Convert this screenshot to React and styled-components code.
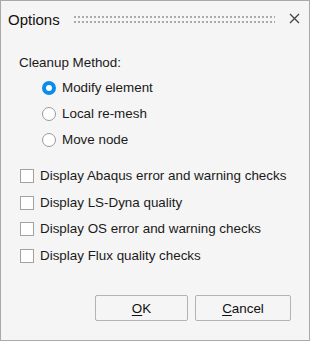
import React from "react"
import styled, { createGlobalStyle } from "styled-components"

const Global = createGlobalStyle`
  html, body { margin: 0; padding: 0; background: #f5f5f5; }
  body { font-family: "Liberation Sans", Arial, sans-serif; }
`

const App = () => {
  const methods = ["Modify element", "Local re-mesh", "Move node"]
  const checks = [
    "Display Abaqus error and warning checks",
    "Display LS-Dyna quality",
    "Display OS error and warning checks",
    "Display Flux quality checks",
  ]
  return (
    <>
      <Global />
      <Dialog>
        <TitleBar>
          <Title>Options</Title>
          <Grip />
          <Close>
            <svg width="11" height="11" viewBox="0 0 11 11">
              <path d="M1 1 L10 10 M10 1 L1 10" stroke="#444" strokeWidth="1.3" />
            </svg>
          </Close>
        </TitleBar>
        <Body>
          <Label>Cleanup Method:</Label>
          <Radios>
            {methods.map((m, i) => (
              <Row key={m}>
                <Radio $on={i === 0} />
                <span>{m}</span>
              </Row>
            ))}
          </Radios>
          <Checks>
            {checks.map((c) => (
              <Row key={c}>
                <Box />
                <span>{c}</span>
              </Row>
            ))}
          </Checks>
        </Body>
        <Footer>
          <Button $w={93}><u>O</u>K</Button>
          <Button $w={96}><u>C</u>ancel</Button>
        </Footer>
      </Dialog>
    </>
  )
}

export default App

// Styling
const Dialog = styled.div`
  box-sizing: border-box;
  width: 310px;
  height: 341px;
  border: 1px solid #a9a9a9;
  background: #f5f5f5;
  display: flex;
  flex-direction: column;
  color: #1a1a1a;
`
const TitleBar = styled.div`
  height: 36px;
  display: flex;
  align-items: center;
  padding: 0 8px 0 7px;
`
const Title = styled.div`
  font-size: 15px;
  color: #111;
  margin-top: 1px;
`
const Grip = styled.div`
  flex: 1;
  height: 7px;
  margin: 0 12px 0 14px;
  background-image: linear-gradient(to bottom, transparent 2px, #f5f5f5 2px),
    linear-gradient(to right, #ababab 2px, transparent 2px);
  background-size: 100% 5px, 4px 5px;
  background-position: 0 0, 0 0;
`
const Close = styled.div`
  width: 14px;
  display: flex;
  justify-content: center;
  margin-top: -1px;
`
const Body = styled.div`
  flex: 1;
  padding: 18px 0 0 18px;
  font-size: 13.4px;
`
const Label = styled.div`
  height: 16px;
  line-height: 16px;
  margin-bottom: 9px;
`
const Radios = styled.div`
  display: flex;
  flex-direction: column;
  gap: 10px;
  padding-left: 23px;
  margin-bottom: 20px;
`
const Checks = styled.div`
  display: flex;
  flex-direction: column;
  gap: 10.5px;
  padding-left: 1px;
`
const Row = styled.div`
  display: flex;
  align-items: center;
  gap: 6px;
  height: 16px;
  line-height: 16px;
`
const Radio = styled.span`
  box-sizing: border-box;
  width: 14px;
  height: 14px;
  border-radius: 50%;
  background: #fff;
  border: ${(p) => (p.$on ? "4px solid #0c8ce9" : "1px solid #9a9a9a")};
`
const Box = styled.span`
  box-sizing: border-box;
  width: 14px;
  height: 14px;
  background: #fff;
  border: 1px solid #a2a2a2;
`
const Footer = styled.div`
  display: flex;
  justify-content: flex-end;
  gap: 7px;
  padding: 0 18px 19px 0;
`
const Button = styled.div`
  box-sizing: border-box;
  width: ${(p) => p.$w}px;
  height: 26px;
  border: 1px solid #b3b3b3;
  border-radius: 2px;
  background: #f5f5f5;
  display: flex;
  align-items: center;
  justify-content: center;
  font-size: 13.4px;
  color: #111;
  u { text-underline-offset: 2px; }
`
